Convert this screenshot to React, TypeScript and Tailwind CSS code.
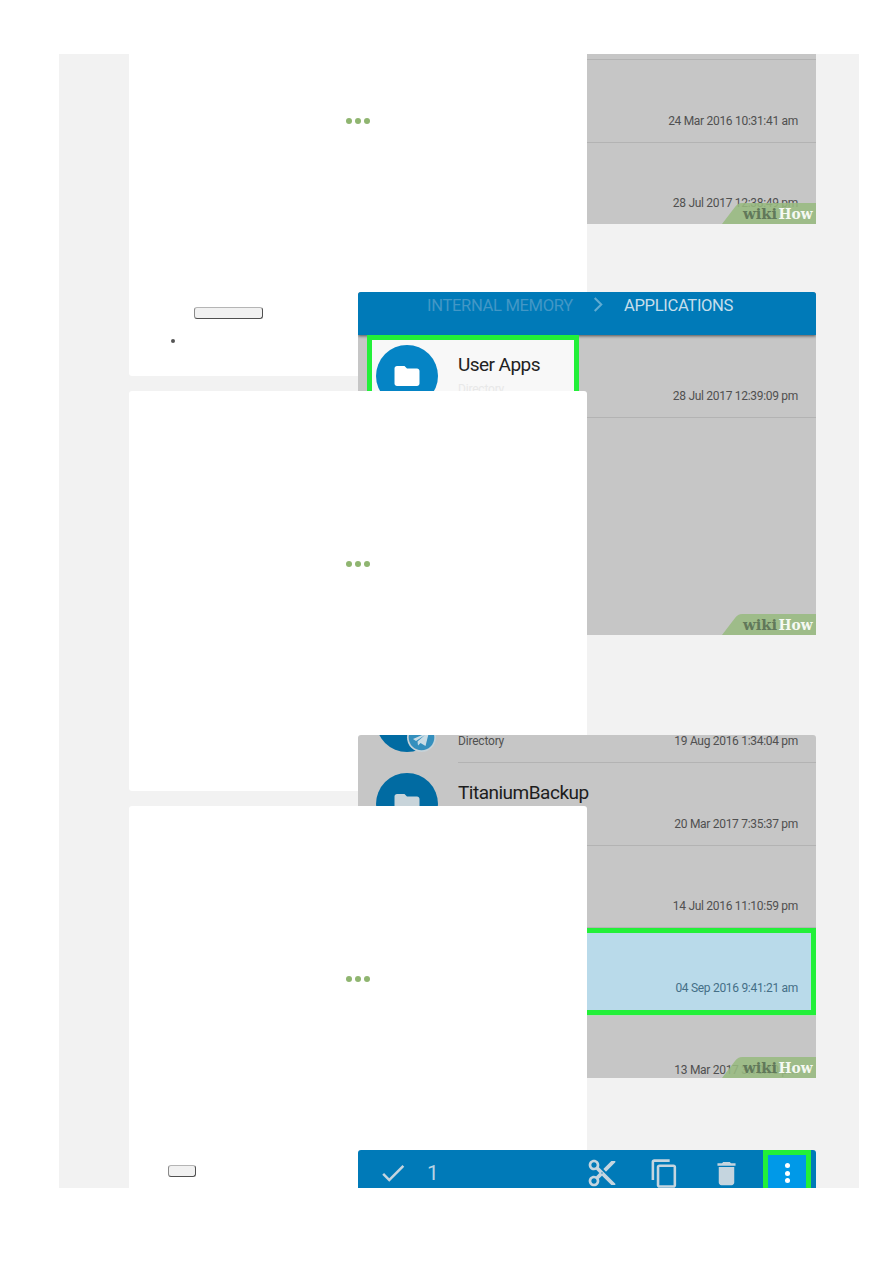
import React from "react";
import { MdCheck, MdContentCopy, MdContentCut, MdDelete, MdFolder } from "react-icons/md";

function Dots({ className }: { className: string }) {
  return (
    <div className={`flex justify-center gap-[3px] ${className}`}>
      <span className="size-1.5 rounded-full bg-[#8fb570]" />
      <span className="size-1.5 rounded-full bg-[#8fb570]" />
      <span className="size-1.5 rounded-full bg-[#8fb570]" />
    </div>
  );
}

function Watermark() {
  return (
    <svg className="absolute right-0 bottom-0 h-[21px] w-[94px]" viewBox="0 0 94 21">
      <path d="M0 21L13 4Q16 0 20 0H94V21Z" fill="#98ba80" fillOpacity="0.87" />
      <g fontFamily="'DejaVu Serif', serif" fontWeight="700" fontSize="14.5">
        <text x="21" y="16" fill="#61785a" textLength="34" lengthAdjust="spacingAndGlyphs">wiki</text>
        <text x="56.5" y="16" fill="#f5f9f2" textLength="34" lengthAdjust="spacingAndGlyphs">How</text>
      </g>
    </svg>
  );
}

function Row({ date, className = "h-[82.5px]" }: { date: string; className?: string }) {
  return (
    <div className={`flex shrink-0 items-end justify-end border-b border-[#b3b3b3] pr-[18px] pb-[13px] text-[12px] leading-[15px] tracking-[-0.3px] whitespace-nowrap text-[#505050] ${className}`}>
      {date}
    </div>
  );
}

function FolderCircle({ className }: { className: string }) {
  return (
    <div className={`flex size-[62px] shrink-0 items-center justify-center rounded-full ${className}`}>
      <MdFolder size={30} />
    </div>
  );
}

function Key({ className }: { className: string }) {
  return (
    <div className={`rounded-[3px] border border-t-[#b5b5b5] border-r-[#505050] border-b-[#505050] border-l-[#8a8a8a] bg-[#f1f1f1] ${className}`} />
  );
}

export default function App() {
  return (
    <div className="h-[1263px] w-[893px] overflow-hidden bg-white pt-[54px] pl-[59px] font-[Roboto,sans-serif]">
      <main className="grid h-[1134px] w-[800px] grid-cols-[70px_229px_229px_229px_43px] grid-rows-[170px_68px_84px_15px_244px_100px_56px_15px_272px_72px_38px] overflow-hidden bg-[#f2f2f2]">
        <figure className="relative z-0 col-start-3 col-end-5 row-start-1 row-end-2 flex flex-col overflow-hidden bg-[#c6c6c6]">
          <div className="h-1.5 shrink-0 border-b border-[#b3b3b3]" />
          <Row date="24 Mar 2016 10:31:41 am" />
          <Row date="28 Jul 2017 12:38:49 pm" />
          <Watermark />
        </figure>

        <section className="z-10 col-start-2 col-end-4 row-start-1 row-end-4 rounded-b-[3px] bg-white">
          <Dots className="pt-16" />
          <Key className="mt-[183px] ml-[65px] h-3 w-[69px]" />
          <div className="mt-[20px] ml-[42px] size-1 rounded-full bg-[#555]" />
        </section>

        <figure className="relative z-20 col-start-3 col-end-5 row-start-3 row-end-6 flex flex-col overflow-hidden rounded-t-[3px] bg-[#c6c6c6]">
          <div className="flex h-[43px] shrink-0 items-start bg-[#007ab8] pt-1 pl-[69px] text-[16.6px] leading-[20px] tracking-[-0.35px] whitespace-nowrap text-[#c5deeb] shadow-[0_1px_3px_rgba(0,0,0,0.6)]">
            <span className="w-[146px] text-[#4297c6]">INTERNAL MEMORY</span>
            <svg className="mt-[1px] ml-[20px] h-[15px] w-[10px]" viewBox="0 0 10 16" fill="none" stroke="#5fabd2" strokeWidth="2.2">
              <path d="M1.5 1L8.5 8L1.5 15" />
            </svg>
            <span className="ml-[21px]">APPLICATIONS</span>
          </div>
          <Row date="28 Jul 2017 12:39:09 pm" />
          <div className="absolute top-[43px] left-[9px] flex h-[83px] w-[212px] border-[5px] border-[#22f039] bg-[#f8f8f8] pt-[5px] pl-1">
            <FolderCircle className="bg-[#0584c5] text-white" />
            <div className="pt-[9px] pl-5 text-[19px] leading-[22px] tracking-[-0.55px] whitespace-nowrap text-[#222]">
              User Apps
              <div className="mt-[6px] text-[12px] leading-[15px] tracking-[-0.2px] text-[#e8e8e8]">Directory</div>
            </div>
          </div>
          <Watermark />
        </figure>

        <section className="z-30 col-start-2 col-end-4 row-start-5 row-end-8 rounded-[3px] bg-white">
          <Dots className="pt-[170px]" />
        </section>

        <figure className="relative z-40 col-start-3 col-end-5 row-start-7 row-end-10 flex flex-col overflow-hidden rounded-t-[3px] bg-[#c6c6c6]">
          <div className="relative h-7 shrink-0">
            <svg className="absolute top-0 left-[18px] h-[18px] w-[62px]" viewBox="0 0 62 18">
              <circle cx="31" cy="-14" r="31" fill="#016ba2" />
              <circle cx="45.5" cy="2.5" r="14.5" fill="#c6d2d8" />
              <circle cx="45.5" cy="2.5" r="12.8" fill="#348fbd" />
              <path d="M37 4L53 -3L49.5 11L44.5 8L42 10.5L41.5 6.5L49 0L40 6Z" fill="#c9dce5" />
            </svg>
            <div className="ml-[100px] flex h-7 items-end justify-between border-b border-[#b3b3b3] pr-[18px] pb-[13px] text-[12px] leading-[15px] tracking-[-0.3px] text-[#505050]">
              <span className="tracking-[-0.2px]">Directory</span>
              <span>19 Aug 2016 1:34:04 pm</span>
            </div>
          </div>
          <Row date="20 Mar 2017 7:35:37 pm" />
          <Row date="14 Jul 2016 11:10:59 pm" />
          <div className="flex h-[87px] shrink-0 items-end justify-end border-[5px] border-[#22f039] bg-[#b9daea] pr-[13px] pb-[14px] text-[12px] leading-[15px] tracking-[-0.3px] text-[#456f87]">
            04 Sep 2016 9:41:21 am
          </div>
          <div className="flex h-[63px] shrink-0 items-end justify-end border-t border-[#b5d5b8] pr-[18px] text-[12px] leading-[15px] tracking-[-0.3px] text-[#505050]">
            13 Mar 2017 3:10:10 pm
          </div>
          <div className="absolute top-[38px] left-[18px] flex whitespace-nowrap">
            <FolderCircle className="bg-[#016ba2] text-[#c8d4da]" />
            <span className="pt-[9px] pl-5 text-[19px] leading-[22px] tracking-[-0.5px] text-[#1d1d1d]">TitaniumBackup</span>
          </div>
          <Watermark />
        </figure>

        <section className="z-50 col-start-2 col-end-4 row-start-9 row-end-12 rounded-t-[3px] bg-white">
          <Dots className="pt-[170px]" />
          <Key className="mt-[183px] ml-[39px] h-3 w-7" />
        </section>

        <figure className="z-60 col-start-3 col-end-5 row-start-11 row-end-12 overflow-hidden rounded-t-[3px] bg-[#007ab8]">
          <div className="flex h-[46px] items-center pl-5 text-[#c5d5df]">
            <MdCheck size={30} />
            <span className="ml-[19px] w-4 text-[21px] leading-[24px] text-[#b4d3e4]">1</span>
            <MdContentCut size={32} className="ml-[143px]" />
            <MdContentCopy size={31} className="ml-[31px]" />
            <MdDelete size={31} className="ml-[31px]" />
            <div className="ml-[21px] flex h-[46px] w-12 flex-col items-center gap-[2.5px] border-[5px] border-b-0 border-[#22f039] bg-[#0099e8] pt-[8px]">
              <span className="size-[5px] rounded-full bg-white" />
              <span className="size-[5px] rounded-full bg-white" />
              <span className="size-[5px] rounded-full bg-white" />
            </div>
          </div>
        </figure>
      </main>
    </div>
  );
}
